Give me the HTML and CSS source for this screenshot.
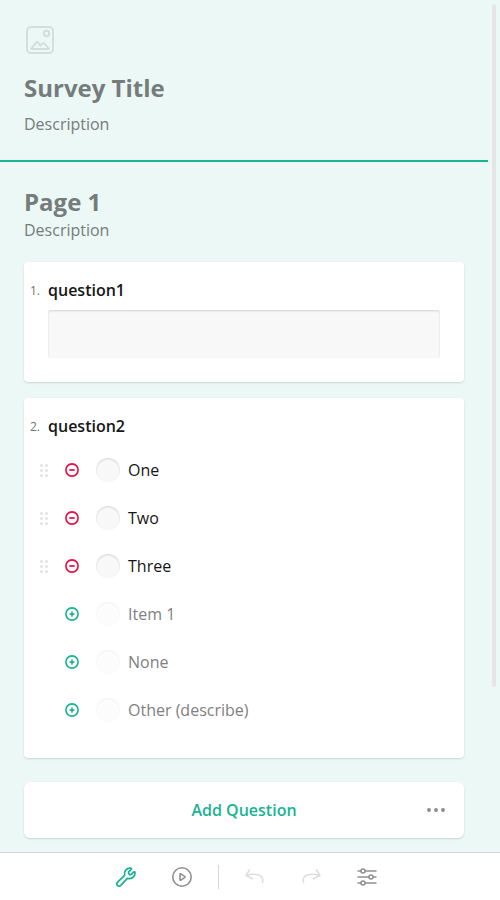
FILE: index.html
```
<!DOCTYPE html>
<html lang="en">
<head>
<meta charset="utf-8">
<title>Survey Creator</title>
<link rel="stylesheet" href="styles.css">
</head>
<body>
<svg class="defs" width="0" height="0">
  <symbol id="drag" viewBox="0 0 24 24"><g fill="currentColor"><circle cx="9.5" cy="7.5" r="1.5"/><circle cx="14.5" cy="7.5" r="1.5"/><circle cx="9.5" cy="12.5" r="1.5"/><circle cx="14.5" cy="12.5" r="1.5"/><circle cx="9.5" cy="17.5" r="1.5"/><circle cx="14.5" cy="17.5" r="1.5"/></g></symbol>
  <symbol id="remove" viewBox="0 0 16 16"><circle cx="8" cy="8" r="6.1" fill="none" stroke="currentColor" stroke-width="1.6"/><path d="M5.3 8h5.4" stroke="currentColor" stroke-width="1.7"/></symbol>
  <symbol id="add" viewBox="0 0 16 16"><circle cx="8" cy="8" r="6.1" fill="none" stroke="currentColor" stroke-width="1.6"/><path d="M5.400 8h5.200M8 5.400v5.200" stroke="currentColor" stroke-width="1.7"/></symbol>
</svg>
<div class="creator">
  <main class="surface">
    <header class="survey-header">
      <svg class="logo" viewBox="0 0 32 32" fill="none" stroke="currentColor" stroke-width="2" stroke-linejoin="round"><rect x="3" y="3" width="26" height="26" rx="4"/><circle cx="22.5" cy="9.5" r="2.7"/><path d="M7.4 24.100l4.900-5.600c.5-.6 1.100-.6 1.600 0l2.500 3 2.500-2.200c.5-.5 1.100-.4 1.500.1l4.200 4.700c.4.600.200 1-.5 1H7.900c-.7 0-.9-.5-.5-1z"/></svg>
      <h1 class="title">Survey Title</h1>
      <div class="description">Description</div>
    </header>
    <section class="page">
      <h2 class="title">Page 1</h2>
      <div class="description">Description</div>
      <article class="card question question-text">
        <h3 class="question-title"><span class="number">1.</span>question1</h3>
        <div class="input"></div>
      </article>
      <article class="card question question-choice">
        <h3 class="question-title"><span class="number">2.</span>question2</h3>
        <ul class="items">
          <li class="item"><svg class="drag"><use href="#drag"/></svg><svg class="action remove"><use href="#remove"/></svg><span class="radio"></span>One</li>
          <li class="item"><svg class="drag"><use href="#drag"/></svg><svg class="action remove"><use href="#remove"/></svg><span class="radio"></span>Two</li>
          <li class="item"><svg class="drag"><use href="#drag"/></svg><svg class="action remove"><use href="#remove"/></svg><span class="radio"></span>Three</li>
          <li class="item ghost"><span class="drag"></span><svg class="action add"><use href="#add"/></svg><span class="radio"></span>Item 1</li>
          <li class="item ghost"><span class="drag"></span><svg class="action add"><use href="#add"/></svg><span class="radio"></span>None</li>
          <li class="item ghost"><span class="drag"></span><svg class="action add"><use href="#add"/></svg><span class="radio"></span>Other (describe)</li>
        </ul>
      </article>
      <div class="card add-question">
        <span class="add-label">Add Question</span>
        <svg class="more" viewBox="0 0 24 24" fill="currentColor"><circle cx="5" cy="12" r="1.900"/><circle cx="12" cy="12" r="1.900"/><circle cx="19" cy="12" r="1.900"/></svg>
      </div>
    </section>
    <div class="scrollbar"></div>
  </main>
  <nav class="toolbar">
    <svg class="tool active" viewBox="0 0 24 24"><path d="M17.200 4.500C17.900 3.800 17.500 3.300 16.500 3.200C12.500 2.900 9.700 6.200 10.600 10.400L3.600 17.200C1.300 19.500 4.300 22.600 6.700 20.300L13.300 13.400C17.500 14.600 21.200 11.500 21 8C21 6.800 20.300 6.400 19.500 7.200L17.500 9.200C16.800 9.900 15.900 9.800 15.200 9.100C14.400 8.400 14.300 7.400 15 6.700Z"/></svg>
    <svg class="tool" viewBox="0 0 24 24"><circle cx="12" cy="12" r="9.200"/><path d="M10 9.200v5.600c0 .5.400.6.800.4l3.800-2.600c.5-.4.500-.8 0-1.200l-3.800-2.600c-.4-.2-.8-.1-.8.400z"/></svg>
    <span class="separator"></span>
    <svg class="tool disabled" viewBox="0 0 24 24"><path d="M6.800 4.500L3 10.500l7 3.500M3.300 10.400c9-2.800 16.500-.4 16.500 5.100 0 1-.2 1.700-.7 2.500"/></svg>
    <svg class="tool disabled" viewBox="0 0 24 24"><path d="M17.200 4.500l3.800 6-7 3.500M20.700 10.400c-9-2.800-16.500-.4-16.500 5.100 0 1 .2 1.700.7 2.500"/></svg>
    <svg class="tool" viewBox="0 0 24 24"><path d="M2.500 6H6M10 6h11.500M2.500 12H14M18 12h3.500M2.500 18H6M10 18h11.500"/><circle cx="8" cy="6" r="2"/><circle cx="16" cy="12" r="2"/><circle cx="8" cy="18" r="2"/></svg>
  </nav>
</div>
</body>
</html>
```
FILE: styles.css
```
* { box-sizing: border-box; }
body {
  margin: 0;
  overflow: hidden;
  font: 400 16px/24px "Open Sans", sans-serif;
  color: #161616;
}
h1, h2, h3, ul { margin: 0; padding: 0; }
.defs { position: absolute; }
.creator { display: flex; flex-direction: column; height: 900px; background: #fff; }
.surface { position: relative; flex: 1; min-height: 0; overflow: hidden; background: #ebf8f6; }
.scrollbar { position: absolute; top: 4px; right: 4px; width: 4px; height: 683px; border-radius: 2px; background: #e5e5e5; }
.survey-header { height: 162px; margin-right: 12px; padding: 24px; border-bottom: 2px solid #19b394; }
.logo { display: block; width: 32px; height: 32px; margin-bottom: 16px; color: #d3dfdd; }
.title { font-size: 24px; line-height: 32px; font-weight: 700; color: #767c7b; }
.description { color: #767c7b; }
.survey-header .description { margin-top: 8px; }
.page { padding: 24px 36px 14px 24px; }
.card { background: #fff; border-radius: 4px; box-shadow: 0 1px 2px rgba(0, 0, 0, 0.15); }
.question { padding: 16px 24px 24px; }
.question-text { height: 120px; margin-top: 20px; }
.question-choice { height: 360px; margin-top: 16px; }
.question-title { display: flex; margin-left: -24px; font-size: 16px; font-weight: 600; }
.number { width: 24px; padding: 1px 8px 0 0; text-align: right; font-size: 12px; font-weight: 400; color: #737373; }
.question-title { height: 24px; }
.input { height: 48px; margin-top: 8px; border-radius: 3px; background: #f8f8f8; box-shadow: inset 0 1px 2px rgba(0, 0, 0, 0.15); }
.items { margin-top: 8px; list-style: none; }
.item { display: flex; align-items: center; height: 48px; margin-left: -16px; }
.drag { width: 24px; height: 24px; color: #e3e3e3; }
.action { width: 16px; height: 16px; margin: 0 16px 0 8px; }
.remove { color: #e60a3e; }
.add { color: #19b394; }
.radio { width: 24px; height: 24px; margin-right: 8px; border-radius: 50%; background: #f8f8f8; box-shadow: inset 0 1px 2px rgba(0, 0, 0, 0.15); }
.ghost { color: #808080; }
.ghost .radio { opacity: 0.35; }
.add-question { display: flex; align-items: center; height: 56px; margin-top: 24px; padding: 0 16px 0 40px; border-radius: 6px; }
.add-label { flex: 1; text-align: center; font-weight: 600; color: #19b394; }
.more { width: 24px; height: 24px; color: #8a8a8a; }
.toolbar { display: flex; justify-content: center; align-items: center; height: 48px; padding-right: 8px; border-top: 1px solid #d6d6d6; gap: 32px; }
.tool { width: 24px; height: 24px; fill: none; stroke: #909090; stroke-width: 1.6; stroke-linejoin: round; }
.active { stroke: #19b394; stroke-width: 1.7; }
.disabled { stroke: #dedede; }
.separator { width: 1px; height: 24px; margin: 0 -8px; background: #d6d6d6; }
```
